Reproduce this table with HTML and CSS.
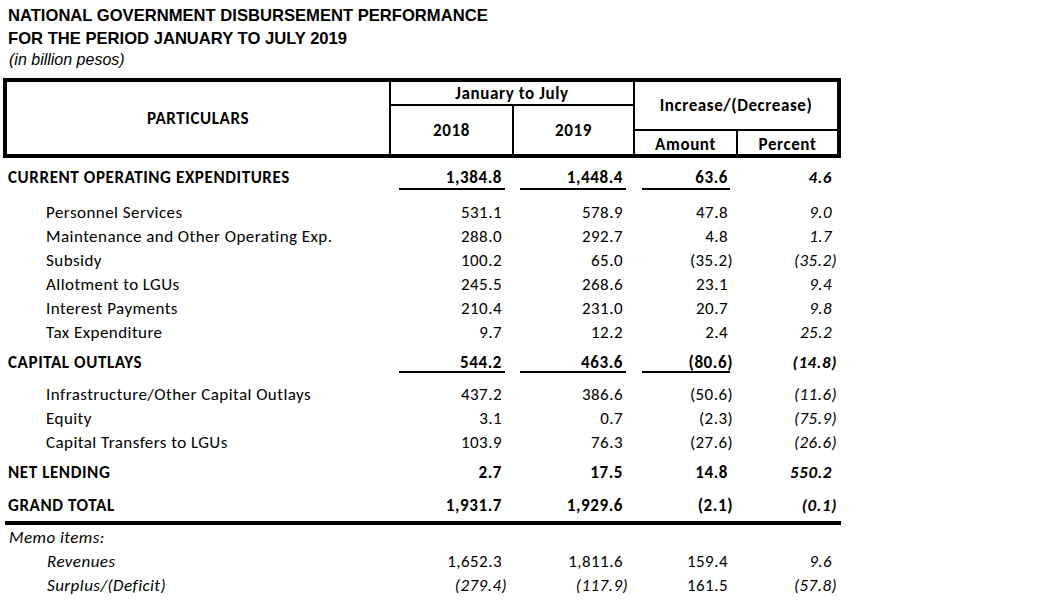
FILE: index.html
```html
<!DOCTYPE html>
<html>
<head>
<meta charset="utf-8">
<link rel="stylesheet" href="styles.css">
</head>
<body>
<div class="page">
  <div class="title">
    <div class="t1">NATIONAL GOVERNMENT DISBURSEMENT PERFORMANCE</div>
    <div class="t1">FOR THE PERIOD JANUARY TO JULY 2019</div>
    <div class="t2">(in billion pesos)</div>
  </div>

  <div class="head">
    <div class="h-part">PARTICULARS</div>
    <div class="h-jan">January to July</div>
    <div class="h-y1">2018</div>
    <div class="h-y2">2019</div>
    <div class="h-inc">Increase/(Decrease)</div>
    <div class="h-amt">Amount</div>
    <div class="h-pct">Percent</div>
  </div>

  <div class="tbody">
    <div class="row b ul r-coe">
      <div class="lbl">CURRENT OPERATING EXPENDITURES</div>
      <div class="c1">1,384.8</div><div class="c2">1,448.4</div><div class="c3">63.6</div><div class="c4">4.6</div>
    </div>

    <div class="row sub first">
      <div class="lbl">Personnel Services</div>
      <div class="c1">531.1</div><div class="c2">578.9</div><div class="c3">47.8</div><div class="c4">9.0</div>
    </div>
    <div class="row sub">
      <div class="lbl">Maintenance and Other Operating Exp.</div>
      <div class="c1">288.0</div><div class="c2">292.7</div><div class="c3">4.8</div><div class="c4">1.7</div>
    </div>
    <div class="row sub">
      <div class="lbl">Subsidy</div>
      <div class="c1">100.2</div><div class="c2">65.0</div><div class="c3">(35.2<span class="cp">)</span></div><div class="c4">(35.2<span class="cp">)</span></div>
    </div>
    <div class="row sub">
      <div class="lbl">Allotment to LGUs</div>
      <div class="c1">245.5</div><div class="c2">268.6</div><div class="c3">23.1</div><div class="c4">9.4</div>
    </div>
    <div class="row sub">
      <div class="lbl">Interest Payments</div>
      <div class="c1">210.4</div><div class="c2">231.0</div><div class="c3">20.7</div><div class="c4">9.8</div>
    </div>
    <div class="row sub">
      <div class="lbl">Tax Expenditure</div>
      <div class="c1">9.7</div><div class="c2">12.2</div><div class="c3">2.4</div><div class="c4">25.2</div>
    </div>

    <div class="row b ul r-co">
      <div class="lbl">CAPITAL OUTLAYS</div>
      <div class="c1">544.2</div><div class="c2">463.6</div><div class="c3">(80.6<span class="cp">)</span></div><div class="c4">(14.8<span class="cp">)</span></div>
    </div>

    <div class="row sub first2">
      <div class="lbl">Infrastructure/Other Capital Outlays</div>
      <div class="c1">437.2</div><div class="c2">386.6</div><div class="c3">(50.6<span class="cp">)</span></div><div class="c4">(11.6<span class="cp">)</span></div>
    </div>
    <div class="row sub">
      <div class="lbl">Equity</div>
      <div class="c1">3.1</div><div class="c2">0.7</div><div class="c3">(2.3<span class="cp">)</span></div><div class="c4">(75.9<span class="cp">)</span></div>
    </div>
    <div class="row sub">
      <div class="lbl">Capital Transfers to LGUs</div>
      <div class="c1">103.9</div><div class="c2">76.3</div><div class="c3">(27.6<span class="cp">)</span></div><div class="c4">(26.6<span class="cp">)</span></div>
    </div>

    <div class="row b r-nl">
      <div class="lbl">NET LENDING</div>
      <div class="c1">2.7</div><div class="c2">17.5</div><div class="c3">14.8</div><div class="c4">550.2</div>
    </div>

    <div class="row b r-gt">
      <div class="lbl">GRAND TOTAL</div>
      <div class="c1">1,931.7</div><div class="c2">1,929.6</div><div class="c3">(2.1<span class="cp">)</span></div><div class="c4">(0.1<span class="cp">)</span></div>
    </div>

    <div class="rule"></div>

    <div class="row memo">
      <div class="lbl">Memo items:</div>
      <div class="c1"></div><div class="c2"></div><div class="c3"></div><div class="c4"></div>
    </div>
    <div class="row memo sub">
      <div class="lbl">Revenues</div>
      <div class="c1 up">1,652.3</div><div class="c2 up">1,811.6</div><div class="c3 up">159.4</div><div class="c4">9.6</div>
    </div>
    <div class="row memo sub">
      <div class="lbl">Surplus/(Deficit)</div>
      <div class="c1">(279.4<span class="cp">)</span></div><div class="c2">(117.9<span class="cp">)</span></div><div class="c3 up">161.5</div><div class="c4">(57.8<span class="cp">)</span></div>
    </div>
  </div>
</div>
</body>
</html>
```

FILE: styles.css
```css
* { box-sizing: border-box; }

html, body {
  margin: 0;
  padding: 0;
  background: #fff;
  color: #000;
}

.page {
  width: 1050px;
  height: 606px;
  padding-left: 3px;
  font-family: Carlito, Calibri, Lato, "Noto Sans", sans-serif;
  font-size: 17px;
  letter-spacing: 0.45px;
}

/* ---------- title ---------- */
.title {
  padding: 5px 0 0 5px;
  font-family: "Liberation Sans", Arial, sans-serif;
  letter-spacing: 0;
  height: 78px;
}
.t1 {
  font-weight: bold;
  font-size: 16.6px;
  line-height: 22.5px;
}
.t2 {
  font-style: italic;
  font-size: 16px;
  line-height: 20px;
  padding-left: 1px;
}

/* ---------- header box ---------- */
.head {
  width: 838px;
  border: 4px solid #000;
  background: #000;
  display: grid;
  grid-template-columns: 382px 121px 119px 101px 99px;
  grid-template-rows: 22px 23px 23px;
  gap: 2px;
  font-weight: bold;
  letter-spacing: 0.6px;
}
.head > div {
  background: #fff;
  display: flex;
  align-items: center;
  justify-content: center;
}
.h-part { grid-column: 1; grid-row: 1 / 4; }
.h-jan  { grid-column: 2 / 4; grid-row: 1; }
.h-y1   { grid-column: 2; grid-row: 2 / 4; }
.h-y2   { grid-column: 3; grid-row: 2 / 4; }
.h-inc  { grid-column: 4 / 6; grid-row: 1 / 3; }
.h-amt  { grid-column: 4; grid-row: 3; padding-top: 3px; }
.h-pct  { grid-column: 5; grid-row: 3; padding-top: 3px; }

/* ---------- body rows ---------- */
.tbody { width: 838px; }

.row {
  display: grid;
  grid-template-columns: 388px 123px 121px 103px 103px;
  height: 24px;
  line-height: 24px;
  white-space: nowrap;
}
.row.b { font-weight: bold; letter-spacing: 0.6px; }

.lbl { padding-left: 5px; }
.sub .lbl { padding-left: 43px; }

.c1, .c2, .c3, .c4 { text-align: right; }
.c1 { margin: 0 9px 0 8px; padding-right: 3px; }
.c2 { margin: 0 9px 0 6px; padding-right: 3px; }
.c3 { margin: 0 8px 0 7px; padding-right: 2px; }
.c4 { padding-right: 9px; font-style: italic; }

.cp { margin-right: -0.3em; }

.ul .c1, .ul .c2, .ul .c3 { border-bottom: 2px solid #000; }

.r-coe { margin-top: 8px; line-height: 23px; }
.r-coe .c1, .r-coe .c2, .r-coe .c3 { height: 24px; }

.first  { margin-top: 11px; }

.r-co { margin-top: 6px; }
.r-co .c1, .r-co .c2, .r-co .c3 { height: 22px; }

.first2 { margin-top: 8px; }
.r-nl { margin-top: 6px; }
.r-gt { margin-top: 9px; }

.rule {
  height: 4px;
  background: #000;
  margin: 3px 0 1px 2px;
}

.memo .lbl { font-style: italic; padding-left: 6px; }
.memo.sub .lbl { padding-left: 44px; }
.memo .c1, .memo .c2, .memo .c3 { font-style: italic; }
.memo .up { font-style: normal; }
```
